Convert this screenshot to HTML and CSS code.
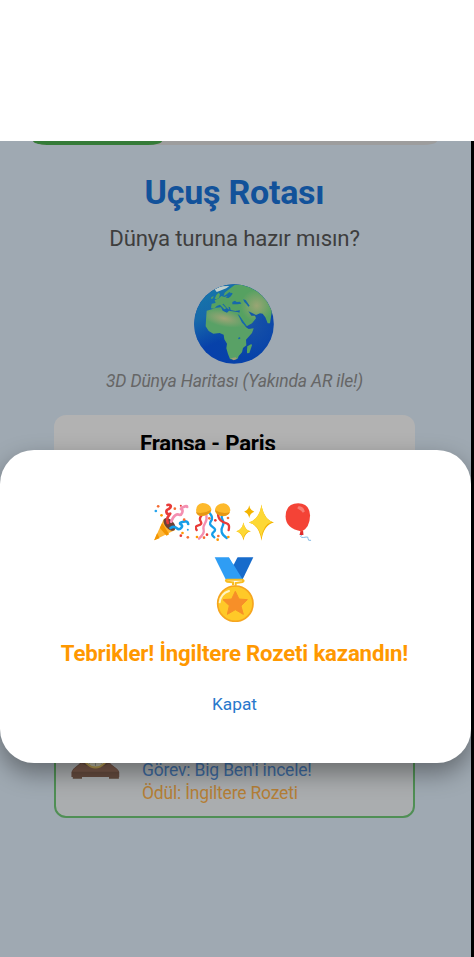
FILE: index.html
```html
<!DOCTYPE html>
<html lang="tr">
<head>
<meta charset="utf-8">
<title>Uçuş Rotası</title>
<link rel="stylesheet" href="styles.css">
</head>
<body>
<main class="screen">
  <div class="progress"><div class="progress-fill"></div></div>
  <h1 class="title">Uçuş Rotası</h1>
  <p class="subtitle">Dünya turuna hazır mısın?</p>
  <svg class="globe" viewBox="42 41 240 238">
    <defs>
      <radialGradient id="sea" cx=".68" cy=".48" r=".68"><stop offset="0" stop-color="#1954a7"/><stop offset=".65" stop-color="#0742a9"/><stop offset="1" stop-color="#0740ab"/></radialGradient>
      <linearGradient id="north" x1="0" y1="0" x2=".5" y2="1"><stop offset="0" stop-color="#157ba9"/><stop offset=".38" stop-color="#1769aa"/><stop offset=".7" stop-color="#1769aa" stop-opacity="0"/></linearGradient>
      <radialGradient id="sand" gradientUnits="userSpaceOnUse" cx="0" cy="0" r="1" gradientTransform="translate(132 143) rotate(12) scale(66 25)"><stop offset="0" stop-color="#a0a476"/><stop offset="1" stop-color="#59a166"/></radialGradient>
      <radialGradient id="steppe" gradientUnits="userSpaceOnUse" cx="230" cy="105" r="48"><stop offset="0" stop-color="#9aa574"/><stop offset="1" stop-color="#56a161"/></radialGradient>
      <clipPath id="ball"><circle cx="162" cy="160" r="119.5"/></clipPath>
    </defs>
    <g clip-path="url(#ball)">
      <path fill="url(#sea)" d="M40 40h245v240H40z"/><path fill="url(#north)" d="M40 40h245v240H40z"/>
      <path fill="#c1cecb" d="M104 56L123 47 148 46 139 53 124 59 110 64z"/>
      <path fill="url(#steppe)" d="M145 57L165 42 200 40 285 60 270 158 263 158 256 140 248 129 240 128 228 133 215 126 205 122 214 135 225 135 228 143 216 158 200 167 192 158 176 132 180 119 166 121 152 118 150 110 145 108 148 117 141 112 130 99 127 101 139 113 133 116 120 102 110 106 103 114 93 113 95 99 107 97 104 89 117 83 124 76 133 79 146 75 154 68 148 64 138 72 131 76 134 66z"/>
      <path fill="#1769aa" d="M145 74L155 66 158 69 152 77 146 82 137 81z"/>
      <path fill="#56a161" d="M109 73l7-7 4 5-3 10-7 5-6-2zM94 80l7-4-2 7-6 2z"/>
      <path fill="url(#sand)" d="M80 120l16-4 13-5 14-1 5 10 13 6 6-6 19 3 10 2 10 27 12 18 8 5 15-2-5 14-18 20 1 17-10 8-3 13-10 11-3 8-13 3-10-2-6-15-5-17 2-14-8-13-2-14-12-5-19 2-14-8-9-14 1-19z"/>
      <path fill="#1769aa" d="M157 94l8-4 5 4 10-1 4 6-12 2-15 0zM189 86l8 2 12 17-4 3-6-8-6-6zM173 130l5 4 10 15 12 16-3 2-11-11z"/>
      <path fill="#56a161" d="M201 237l1-10 12-7 2 4-8 23-7 1z"/>
      <path fill="#1769aa" d="M174 202l6-3 1 5-5 2z"/>
      <path fill="#9f9c75" d="M152 263l15-3 4 5-10 4z"/>
    </g>
  </svg>
  <p class="caption">3D Dünya Haritası (Yakında AR ile!)</p>

  <section class="routes">
    <article class="card"><h2 class="city">Fransa - Paris</h2></article>
    <article class="card card-active">
      <svg class="clock" viewBox="214 60 148 85">
        <path fill="#634b3e" d="M219 132h28v12h-28zM329 132h30v12h-30z"/>
        <path fill="#654b3e" d="M215 139v-15q3-10 14-17 12-8 15-15l8-32h72l6 32q2 8 14 15 14 9 16 17v15z"/>
        <path fill="#79594a" d="M217 123q4-9 14-15 10-7 14-11 43 25 86 0 4 6 13 11 12 8 15 15z"/>
        <circle cx="288" cy="75" r="38" fill="#b59a4f"/><circle cx="288" cy="75" r="32" fill="#b8b7a5"/>
        <path stroke="#666" stroke-width="2" d="M288 97v8M273 93l-3 5M303 93l3 5"/>
      </svg>
      <div class="details">
        <p class="task">Görev: Big Ben'i incele!</p>
        <p class="reward">Ödül: İngiltere Rozeti</p>
      </div>
    </article>
  </section>

  <section class="dialog" role="dialog">
    <div class="party">
      <svg class="popper" viewBox="24 24 110 114">
        <path fill="#ffb636" d="M27 136L56 71q20 5 34 34z"/><path fill="#f29500" d="M27 136l9-22 7 16zM44 99l7-15 21 34-8 4z"/>
        <ellipse cx="73" cy="88" rx="13" ry="23" transform="rotate(-42 73 88)" fill="#6b4036"/>
        <g fill="none" stroke-width="8" stroke-linecap="round" stroke-linejoin="round"><path stroke="#e83b38" d="M68 84q-4-12 0-18t7-10q-9 4-11-4t7-10q8-6 5-10t-9-2"/><path stroke="#f48fb1" d="M78 80q6-15 12-19t12-2 9-6-2-10 6-7 11 0"/><path stroke="#159de8" d="M76 99q10-7 18 0t14 0-1-11 7-8 15 7"/></g>
        <g fill="#f56c32"><circle cx="39" cy="34" r="4"/><circle cx="89" cy="41" r="4"/><circle cx="128" cy="127" r="4"/><circle cx="117" cy="74" r="4"/></g><g fill="#ff9800"><circle cx="49" cy="61" r="4"/><circle cx="112" cy="114" r="4"/></g><g fill="#26a4ed"><circle cx="32" cy="48" r="4"/><circle cx="128" cy="104" r="3"/></g><g fill="#e83b38"><circle cx="107" cy="122" r="4"/><circle cx="107" cy="32" r="3"/></g>
      </svg>
      <svg class="confetti" viewBox="150 24 108 114">
        <g fill="none" stroke-width="7" stroke-linecap="round"><path stroke="#f48fb1" d="M184 60q3 15-4 25t-4 20-14 26"/><path stroke="#159de8" d="M194 54q12 14 4 24t5 18 3 15 2 16M238 50q-12 12-6 23t1 20-3 18 15 18"/><path stroke="#e83b38" d="M171 60q-10 10-4 19t-7 12-5 14M219 54q0 15 8 22t18 9 6 20"/></g>
        <path fill="#fdb92b" d="M154 53Q150 27 173 24q22 2 26 18 1 11-14 17-21 10-31-6zM210 43q4-17 26-18 18 3 20 21-4 20-26 17-20-5-20-20z"/><path fill="#e69714" d="M153 52q22 6 46-8-2 10-16 16-24 9-30-8zM210 45q20 14 45 7-7 13-26 11-18-4-19-18z"/>
        <g fill="#f56c32"><circle cx="193" cy="70" r="4"/><circle cx="220" cy="123" r="4"/><circle cx="177" cy="128" r="4"/><circle cx="249" cy="69" r="4"/></g><g fill="#ff9800"><circle cx="156" cy="126" r="4"/><circle cx="218" cy="134" r="4"/><circle cx="250" cy="126" r="4"/></g><g fill="#e83b38"><circle cx="211" cy="76" r="4"/><circle cx="186" cy="119" r="4"/></g>
      </svg>
      <svg class="sparkles" viewBox="20 26 112 108"><path fill="#f4b400" d="M95 27q6 44 37 53-31 7-37 54-6-46-37-54 32-11 37-53zM42 80q4 23 22 26-18 4-22 27-4-22-21-27 17-4 21-26zM59 29q2 15 15 19-13 4-15 19-2-15-15-19 13-4 15-19z"/><path fill="#fdd835" d="M95 27q6 41 31 51-26 8-31 47-7-38-37-45 32-11 37-53zM42 80q4 22 18 25-15 5-18 22-5-17-21-21 17-4 21-26z"/></svg>
      <svg class="balloon" viewBox="164 23 80 115"><path fill="none" stroke="#82b9e4" stroke-width="3" d="M215 118q-8 7-2 9 7 1 14-1t6 5 9 5"/><path fill="#df2c2c" d="M210 108h8l1 12h-12z"/><path fill="#f44336" d="M165 64q0-39 38-40 35 1 36 37-1 37-25 48-49-8-49-45z"/><path fill="#f77b72" d="M204 33q15-1 19 16-7 7-10-2-8-5-13-8z"/></svg>
    </div>
    <svg class="medal" viewBox="42 23 118 195">
      <path fill="#176bcb" d="M99 24h60l-32 66-30-10z"/><path fill="#2f9df4" d="M43 24h43l42 68H77z"/>
      <path fill="#fff" d="M87 23h25l-12 23z"/>
      <path fill="none" stroke="#f9bd20" stroke-width="6" d="M98 108v-9l-18-2q-7-4 0-6h46q8 3 0 7l-20 3v8"/>
      <circle cx="105" cy="163" r="53" fill="#ffc928" stroke="#f6a51f" stroke-width="5"/>
      <path fill="#f78f28" stroke="#f78f28" stroke-width="3" stroke-linejoin="round" d="M105 126l11 23 25 2-19 19 7 25-24-14-24 14 6-26-19-18 26-2z"/><path d="M58 159q3-26 28-34" fill="none" stroke="#fff4c5" stroke-width="6" stroke-linecap="round"/>
    </svg>
    <h2 class="congrats">Tebrikler! İngiltere Rozeti kazandın!</h2>
    <button class="close">Kapat</button>
  </section>
</main>
</body>
</html>
```
FILE: styles.css
```css
* { box-sizing: border-box; }
body { margin: 0; padding-top: 141px; background: linear-gradient(#fff 141px, #000 141px); font-family: Roboto, "Liberation Sans", sans-serif; }
h1, h2, p { margin: 0; white-space: nowrap; }
svg { display: block; flex: none; }
.screen { position: relative; width: 471px; height: 816px; padding-right: 2px; overflow: hidden; background: #9fa9b2; display: flex; flex-direction: column; align-items: center; }
.progress { width: 404px; height: 4px; flex: none; border-radius: 0 0 14px 14px / 0 0 4px 4px; background: #9d9d9d; overflow: hidden; }
.progress-fill { width: 129px; height: 4px; background: #357b38; border-radius: 0 0 14px 14px / 0 0 4px 4px; }
.title { margin-top: 27px; font-size: 34px; line-height: 40px; font-weight: 700; letter-spacing: -.25px; color: #12529a; }
.subtitle { margin-top: 12px; font-size: 22.2px; line-height: 28px; letter-spacing: -.16px; color: #3e3e3e; }
.globe { width: 80px; height: 80px; margin: 32px 1px 0 0; }
.caption { margin-top: 5px; font-size: 17.5px; line-height: 24px; letter-spacing: -.17px; font-style: italic; color: #666; }
.routes { width: 361px; margin-top: 22px; display: flex; flex-direction: column; gap: 142px; }
.card { height: 130px; border-radius: 12px; background: #b2b2b2; }
.city { padding: 14px 0 0 86px; font-size: 22.2px; line-height: 28px; font-weight: 700; letter-spacing: -.2px; color: #000; }
.card-active { height: 131px; display: flex; align-items: flex-end; padding: 0 0 11px 15px; border: 2px solid #508f55; background: #aaadaf; gap: 22px; }
.clock { width: 49px; height: 28px; margin-bottom: 26px; }
.details { font-size: 17.5px; line-height: 23px; letter-spacing: -.19px; }
.task { color: #3e6a9e; }
.reward { color: #b57f36; }
.dialog { position: absolute; top: 309px; left: 0; width: 471px; height: 313px; padding: 53px 2px 0 0; border-radius: 34px; background: #fff; box-shadow: 0 10px 24px rgba(0, 0, 0, .38); display: flex; flex-direction: column; align-items: center; }
.party { display: flex; align-items: flex-start; gap: 5px; margin-right: 5px; }
.popper { width: 37px; height: 38px; }
.confetti { width: 36px; height: 38px; }
.sparkles { width: 38px; height: 37px; margin-top: 1px; }
.balloon { width: 27px; height: 38px; margin-left: 6px; }
.medal { width: 40px; height: 65px; margin-top: 16px; margin-right: 2px; }
.congrats { margin-top: 16px; font-size: 22.2px; line-height: 30px; font-weight: 700; letter-spacing: -.17px; color: #ff9800; }
.close { margin-top: 24px; padding: 0; border: 0; background: none; font: 400 17.3px/24px Roboto, sans-serif; color: #2878cc; }
```
